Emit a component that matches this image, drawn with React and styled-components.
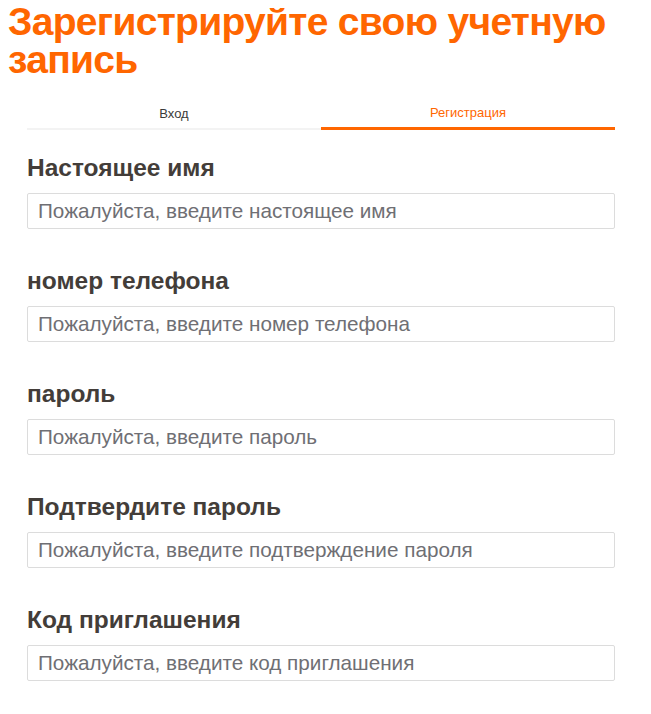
import React, { useState } from "react";
import styled, { createGlobalStyle } from "styled-components";

const GlobalStyle = createGlobalStyle`
  body {
    margin: 8px;
    background: #fff;
    font-family: "Liberation Sans", Arial, sans-serif;
  }
  * {
    box-sizing: border-box;
  }
`;

const Title = styled.h1`
  margin: -5.5px 0 0;
  font-size: 39px;
  line-height: 38px;
  font-weight: 700;
  letter-spacing: -0.7px;
  color: #ff6600;
`;

const Wrapper = styled.div`
  width: 588px;
  margin-left: 19px;
  margin-top: 19.5px;
`;

const Tabs = styled.div`
  display: flex;
`;

const Tab = styled.div`
  flex: 1;
  text-align: center;
  font-size: 13px;
  line-height: 16px;
  padding: 7px 0 6px;
  color: ${({ active }) => (active ? "#ff6600" : "#3a3a3a")};
  border-bottom: ${({ active }) =>
    active ? "3px solid #ff6600" : "2px solid #f3f3f3"};
  margin-top: ${({ active }) => (active ? "0" : "1px")};
  cursor: pointer;
`;

const Form = styled.div`
  display: flex;
  flex-direction: column;
  gap: 38px;
  padding-top: 24px;
`;

const Field = styled.div`
  display: flex;
  flex-direction: column;
  gap: 11px;
`;

const Label = styled.label`
  font-size: 24.5px;
  line-height: 28px;
  font-weight: 700;
  color: #433d39;
`;

const Input = styled.input`
  width: 100%;
  height: 36px;
  border: 1px solid #dcdcdc;
  border-radius: 2px;
  padding: 0 10px;
  font-family: "Liberation Sans", Arial, sans-serif;
  font-size: 20.7px;
  color: #333;
  outline: none;
  &::placeholder {
    color: #6f6f74;
  }
`;

const fields = [
  ["Настоящее имя", "Пожалуйста, введите настоящее имя"],
  ["номер телефона", "Пожалуйста, введите номер телефона"],
  ["пароль", "Пожалуйста, введите пароль"],
  ["Подтвердите пароль", "Пожалуйста, введите подтверждение пароля"],
  ["Код приглашения", "Пожалуйста, введите код приглашения"],
];

export default function App() {
  const [tab, setTab] = useState("register");
  return (
    <>
      <GlobalStyle />
      <Title>Зарегистрируйте свою учетную запись</Title>
      <Wrapper>
        <Tabs>
          <Tab active={tab === "login"} onClick={() => setTab("login")}>
            Вход
          </Tab>
          <Tab active={tab === "register"} onClick={() => setTab("register")}>
            Регистрация
          </Tab>
        </Tabs>
        <Form>
          {fields.map(([label, placeholder]) => (
            <Field key={label}>
              <Label>{label}</Label>
              <Input
                type={label.includes("пароль") ? "password" : "text"}
                placeholder={placeholder}
              />
            </Field>
          ))}
        </Form>
      </Wrapper>
    </>
  );
}
